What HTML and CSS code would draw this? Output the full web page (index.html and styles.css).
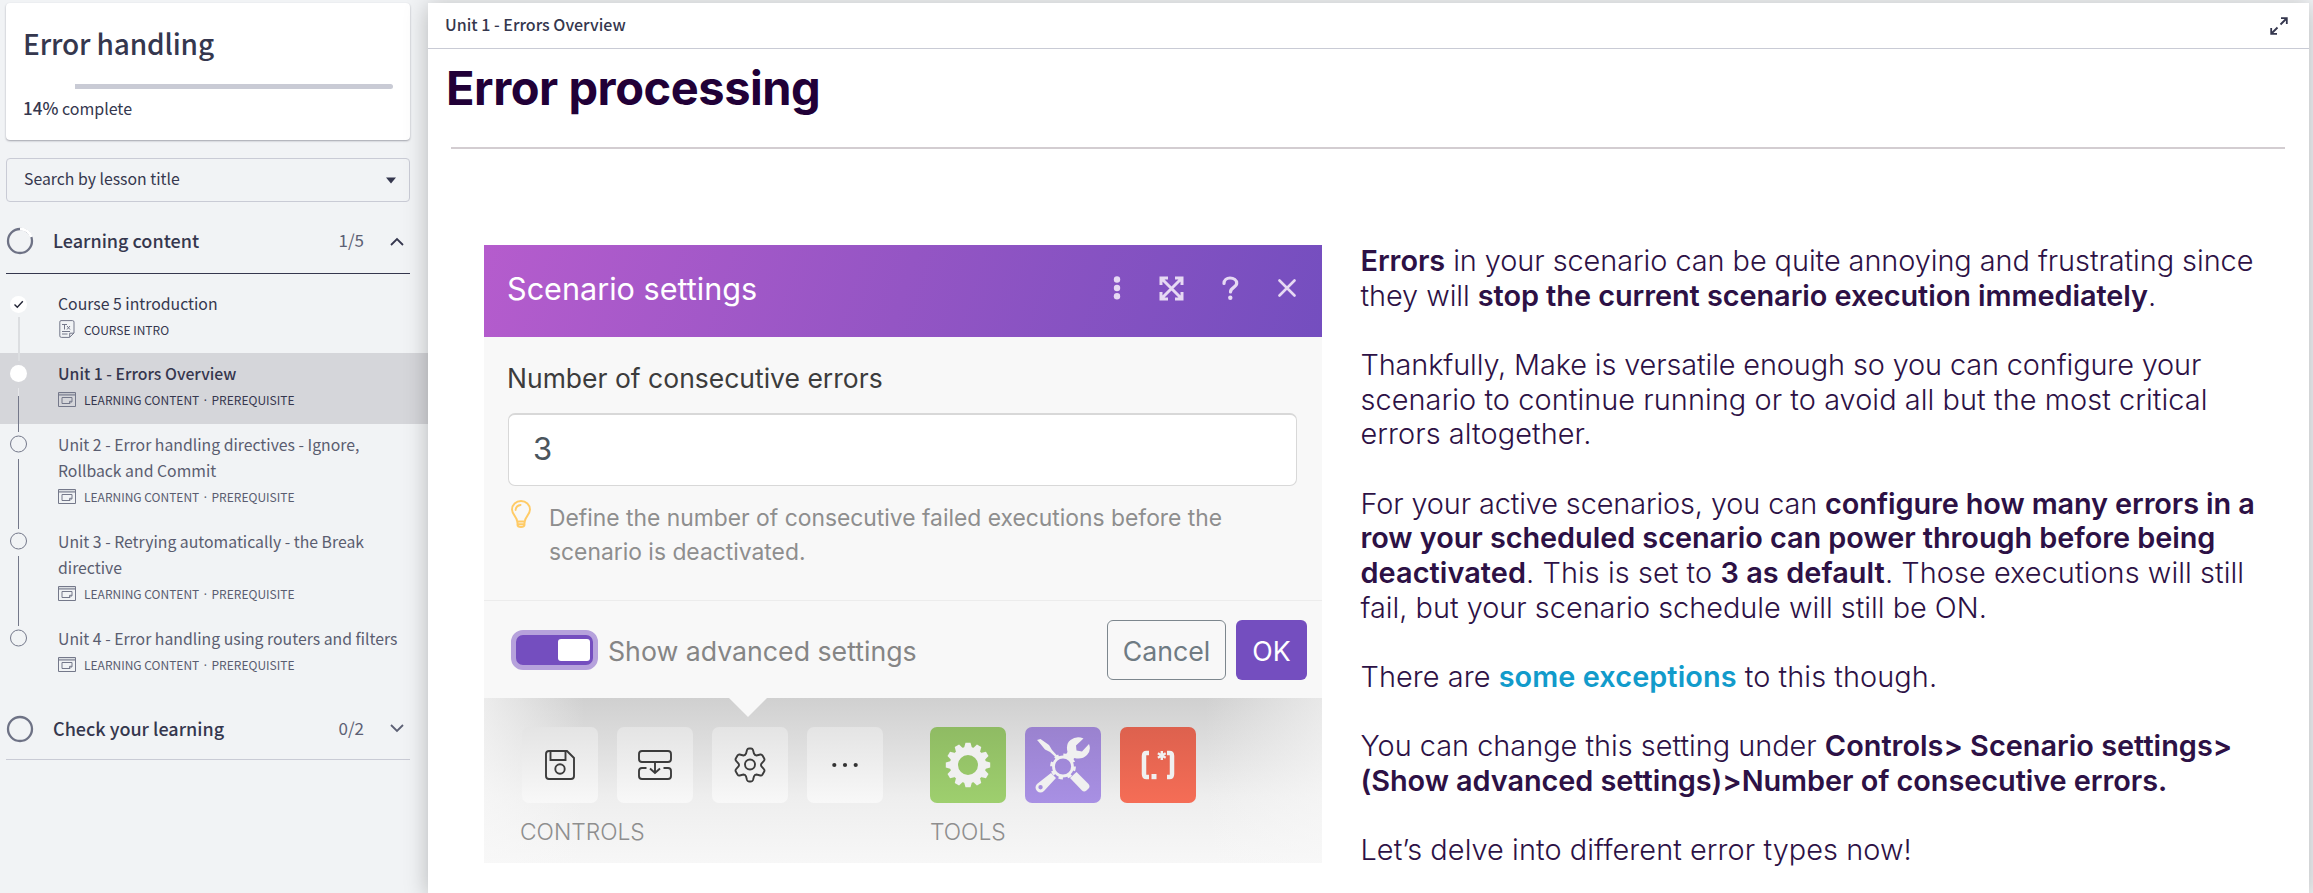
FILE: index.html
```html
<!DOCTYPE html>
<html lang="en">
<head>
<meta charset="utf-8">
<title>Error handling</title>
<link rel="stylesheet" href="styles.css">
</head>
<body>
<svg class="sprite" width="0" height="0">
  <symbol id="content" viewBox="0 0 18 15"><path d="M.5.5h17v14H.5z M.5 3h17" fill="none" stroke="currentColor"/><path d="M.5 1.500h17v1.500H.5z" fill="currentColor" opacity=".35"/><path d="M4 5.500h10v4l-2 2H4z M14 9.300h-2.400v2" fill="none" stroke="currentColor"/></symbol>
</svg>
<div class="app">
  <aside class="sidebar">
    <section class="card">
      <h1 class="course">Error handling</h1>
      <div class="progress"></div>
      <p class="complete"><b>14%</b> complete</p>
    </section>
    <div class="select"><span>Search by lesson title</span><svg width="10" height="7"><path d="M0 .5h10L5 6.500z" fill="#35374e"/></svg></div>

    <div class="section open">
      <svg class="ring" width="28" height="28" viewBox="0 0 28 28"><circle cx="14" cy="14" r="12" fill="none" stroke="#6e7285" stroke-width="2.300"/><path d="M14 2A12 12 0 0 1 25.500 10" fill="none" stroke="#fff" stroke-width="3"/></svg>
      <h2>Learning content</h2><span class="count">1/5</span>
      <svg width="14" height="9" viewBox="0 0 14 9"><path d="M1 8l6-6 6 6" fill="none" stroke="#35374e" stroke-width="1.800"/></svg>
    </div>
    <ul class="lessons">
      <li class="done">
        <div class="rail"><svg class="dot" width="17" height="17"><circle cx="8.500" cy="8.500" r="8.500" fill="#fff"/><path d="M4.500 8.500l2.800 2.800 5.500-6" fill="none" stroke="#222435" stroke-width="1.400"/></svg><i class="light"></i></div>
        <div class="lesson"><p class="name">Course 5 introduction</p><p class="meta"><svg class="doc" width="16" height="18" viewBox="0 0 16 18"><path d="M2 .6h11.500q1.500 0 1.500 1.500V13l-4.500 4.400H2.500Q.8 17.400.8 15.900V2.100Q.8.600 2 .6z M15 13.200h-4.300v4" fill="none" stroke="#74788a"/><path d="M3 4.500h5M5.500 4.500v5M8 6l3 3.500M11 6L8 9.500M3 11.500h8M3 14h5.500" fill="none" stroke="#74788a"/></svg><span>COURSE INTRO</span></p></div>
      </li>
      <li class="current">
        <div class="rail"><svg class="dot" width="17" height="17"><circle cx="8.500" cy="8.500" r="8.500" fill="#fff"/></svg><i class="mixed"></i></div>
        <div class="lesson"><p class="name">Unit 1 - Errors Overview</p><p class="meta"><svg width="18" height="15"><use href="#content"/></svg><span>LEARNING CONTENT<em>·</em>PREREQUISITE</span></p></div>
      </li>
      <li>
        <div class="rail"><svg class="dot" width="17" height="18"><circle cx="8.500" cy="9" r="8" fill="none" stroke="#74788a"/></svg><i></i></div>
        <div class="lesson"><p class="name">Unit 2 - Error handling directives - Ignore,<br>Rollback and Commit</p><p class="meta"><svg width="18" height="15"><use href="#content"/></svg><span>LEARNING CONTENT<em>·</em>PREREQUISITE</span></p></div>
      </li>
      <li>
        <div class="rail"><svg class="dot" width="17" height="18"><circle cx="8.500" cy="9" r="8" fill="none" stroke="#74788a"/></svg><i></i></div>
        <div class="lesson"><p class="name">Unit 3 - Retrying automatically - the Break<br>directive</p><p class="meta"><svg width="18" height="15"><use href="#content"/></svg><span>LEARNING CONTENT<em>·</em>PREREQUISITE</span></p></div>
      </li>
      <li>
        <div class="rail"><svg class="dot" width="17" height="18"><circle cx="8.500" cy="9" r="8" fill="none" stroke="#74788a"/></svg></div>
        <div class="lesson"><p class="name">Unit 4 - Error handling using routers and filters</p><p class="meta"><svg width="18" height="15"><use href="#content"/></svg><span>LEARNING CONTENT<em>·</em>PREREQUISITE</span></p></div>
      </li>
    </ul>
    <div class="section closed">
      <svg class="ring" width="28" height="28" viewBox="0 0 28 28"><circle cx="14" cy="14" r="12" fill="none" stroke="#6e7285" stroke-width="2.300"/></svg>
      <h2>Check your learning</h2><span class="count">0/2</span>
      <svg width="14" height="9" viewBox="0 0 14 9"><path d="M1 1l6 6 6-6" fill="none" stroke="#5c6074" stroke-width="1.800"/></svg>
    </div>
  </aside>

  <main class="panel">
    <header class="bar"><span>Unit 1 - Errors Overview</span>
      <svg width="18" height="18" viewBox="0 0 18 18"><path d="M10.500 7.500L16 2M11 1.200h5.800V7M7.500 10.500L2 16M1.200 11v5.800H7" fill="none" stroke="#35374e" stroke-width="1.800"/></svg>
    </header>
    <h1 class="title">Error processing</h1>
    <hr>
    <div class="columns">
      <figure class="shot">
        <div class="head">
          <span class="head-title">Scenario settings</span>
          <svg class="i1" width="8" height="24" viewBox="0 0 8 24"><g fill="#e6d9f3"><circle cx="4" cy="3.500" r="3.200"/><circle cx="4" cy="12" r="3.200"/><circle cx="4" cy="20.300" r="3.200"/></g></svg>
          <svg class="i2" width="25" height="25" viewBox="0 0 25 25"><path d="M2 9V2h7M16 2h7v7M23 16v7h-7M9 23H2v-7M3 3l19 19M22 3L3 22" fill="none" stroke="#e6d9f3" stroke-width="3"/></svg>
          <svg class="i3" width="17" height="24" viewBox="0 0 17 24"><path d="M2 7.500C2 3.800 4.800 2 8 2c3.800 0 6.700 2 6.700 5.300 0 4.200-6.200 4-6.200 8.700" fill="none" stroke="#e6d9f3" stroke-width="3.200" stroke-linecap="round"/><circle cx="8.300" cy="21.700" r="2.200" fill="#e6d9f3"/></svg>
          <svg class="i4" width="18" height="18" viewBox="0 0 18 18"><path d="M1.500 1.500l15 15M16.500 1.500l-15 15" stroke="#e6d9f3" stroke-width="2.600" stroke-linecap="round"/></svg>
        </div>
        <div class="form">
          <label>Number of consecutive errors</label>
          <div class="input">3</div>
          <div class="hint">
            <svg width="20" height="28" viewBox="0 0 20 28"><path d="M6.200 21.500C6 17 1 14.500 1 9.500a9 8.500 0 0 1 18 0c0 5-5 7.500-5.200 12zM6.500 22v3q0 2 3.500 2t3.500-2v-3M6.500 24.200h7M4.600 10q.4-4.600 5-5" fill="none" stroke="#ffcb66" stroke-width="1.900" stroke-linecap="round"/></svg>
            <p>Define the number of consecutive failed executions before the<br>scenario is deactivated.</p>
          </div>
        </div>
        <div class="foot">
          <span class="toggle"><i></i></span><span class="adv">Show advanced settings</span>
          <span class="btn cancel">Cancel</span><span class="btn ok">OK</span>
        </div>
        <div class="toolbar">
          <div class="group controls">
            <div class="tiles">
              <span class="tile"><svg width="30" height="30" viewBox="0 0 30 30"><path d="M4 1h18l7 7v18q0 3-3 3H4q-3 0-3-3V4q0-3 3-3zM5.500 1v9h15V1" fill="none" stroke="#3c3c3c" stroke-width="1.900"/><circle cx="15" cy="19" r="4.700" fill="none" stroke="#3c3c3c" stroke-width="1.900"/></svg></span>
              <span class="tile"><svg width="34" height="30" viewBox="0 0 34 30"><path d="M4 1h26q3 0 3 3v5q0 3-3 3H4q-3 0-3-3V4q0-3 3-3zM8.500 18H4q-3 0-3 3v5q0 3 3 3h26q3 0 3-3v-5q0-3-3-3h-4.500M17 12v11M12 18.500l5 4.500 5-4.500" fill="none" stroke="#3c3c3c" stroke-width="1.900"/></svg></span>
              <span class="tile"><svg width="34" height="36" viewBox="0 0 34 36"><path d="M14 2.500q.5-1.500 2-1.500h2q1.500 0 2 1.500l1 3.700q.6 1.600 2.500 1.800l3.800-1q1.400-.3 2.200 1l1.700 3q.7 1.300-.3 2.300l-2.400 2.700q-1 1.500 0 3l2.400 2.700q1 1 .3 2.300l-1.700 3q-.8 1.300-2.200 1l-3.800-1q-1.900.2-2.500 1.800l-1 3.700q-.5 1.500-2 1.500h-2q-1.500 0-2-1.500l-1-3.700q-.6-1.600-2.500-1.800l-3.800 1q-1.400.3-2.200-1l-1.700-3q-.7-1.300.3-2.300l2.400-2.700q1-1.500 0-3l-2.400-2.700q-1-1-.3-2.300l1.700-3q.8-1.300 2.200-1l3.800 1q1.900-.2 2.500-1.800z" transform="translate(0 .5)" fill="none" stroke="#3c3c3c" stroke-width="1.900"/><circle cx="17" cy="17.500" r="5" fill="none" stroke="#3c3c3c" stroke-width="1.900"/></svg></span>
              <span class="tile"><svg width="26" height="6"><g fill="#333"><circle cx="2.300" cy="3" r="2.100"/><circle cx="13" cy="3" r="2.100"/><circle cx="23.700" cy="3" r="2.100"/></g></svg></span>
            </div>
            <p>CONTROLS</p>
          </div>
          <div class="group tools">
            <div class="tiles">
              <span class="tile green"><svg width="46" height="46" viewBox="-23 -23 46 46"><circle r="14" fill="none" stroke="#f0f0f0" stroke-width="8"/><g fill="#f0f0f0"><path id="t" d="M-4-17l1.500-5.200h5L4-17z"/><use href="#t" transform="rotate(30)"/><use href="#t" transform="rotate(60)"/><use href="#t" transform="rotate(90)"/><use href="#t" transform="rotate(120)"/><use href="#t" transform="rotate(150)"/><use href="#t" transform="rotate(180)"/><use href="#t" transform="rotate(210)"/><use href="#t" transform="rotate(240)"/><use href="#t" transform="rotate(270)"/><use href="#t" transform="rotate(300)"/><use href="#t" transform="rotate(330)"/></g></svg></span>
              <span class="tile violet"><svg width="56" height="56" viewBox="0 0 56 56"><g fill="#f0f0f0"><path d="M2 3l3.500-1 8.500 6 3 5 5.500 6-1.500 1.500-6-5.500-5-2.500-7-8.500z"/><path d="M48.500 1.500l-7.500 7 .5 5 5.500 1 7-7.500q2.500 6-2 11-5 5-12.500 3l-3 3-6-6 2-3q-2-8 3-12 6-4.500 13-1.500z"/><path d="M35 41l6.500-6 12 12q2 2.500 0 4.500l-2 2q-2.500 2-4.500 0z"/><path fill-rule="evenodd" d="M16 36l5 5-12 13q-3.500 3-7 0-3-3.500 0-7zM5.500 48a2.200 2.200 0 1 0 .1 4.400 2.200 2.200 0 0 0-.1-4.400z"/></g><g transform="translate(28 29.500)"><circle r="9.500" fill="none" stroke="#f0f0f0" stroke-width="2.800"/><circle r="11.500" fill="none" stroke="#f0f0f0" stroke-width="2.800" stroke-dasharray="4.300 4.730"/></g></svg></span>
              <span class="tile red"><svg width="38" height="30" viewBox="0 0 38 30"><path d="M10 3H7.500Q5 3 5 6v18q0 3 2.500 3H10M28 3h2.500Q33 3 33 6v18q0 3-2.500 3H28" fill="none" stroke="#f0f0f0" stroke-width="4.500"/><path d="M12.500 24h5v5.200h-5z" fill="#f0f0f0"/><path d="M22.800 1v9M18.900 3.300l7.800 4.400M26.700 3.300l-7.800 4.400" stroke="#f0f0f0" stroke-width="2.400"/></svg></span>
            </div>
            <p>TOOLS</p>
          </div>
          <svg class="arrow" width="38" height="20"><path d="M0 0h38L19 19z" fill="#f8f8f8"/></svg>
        </div>
      </figure>
      <article class="copy">
        <p><span class="snug"><b>Errors</b> in your scenario can be quite annoying and frustrating since</span><br><span class="snug">they will <b>stop the current scenario execution immediately</b>.</span></p>
        <p><span class="tight">Thankfully, Make is versatile enough so you can configure your</span><br><span class="loose">scenario to continue running or to avoid all but the most critical</span><br><span class="loose">errors altogether.</span></p>
        <p><span class="tight">For your active scenarios, you can <b>configure how many errors in a</b></span><br><b class="snug">row your scheduled scenario can power through before being</b><br><span class="loose"><b>deactivated</b>. This is set to <b>3 as default</b>. Those executions will still</span><br>fail, but your scenario schedule will still be ON.</p>
        <p class="loose">There are <b class="link">some exceptions</b> to this though.</p>
        <p>You can change this setting under <b>Controls&gt; Scenario settings&gt;</b><br><b class="snug">(Show advanced settings)&gt;Number of consecutive errors.</b></p>
        <p class="loose">Let’s delve into different error types now!</p>
      </article>
    </div>
  </main>
</div>
</body>
</html>
```

FILE: styles.css
```css
* { box-sizing: border-box; }
html, body { height: 893px; overflow: hidden; }
body { margin: 0; background: #f1f3f5; font-family: "Noto Sans CJK SC", "Noto Sans", sans-serif; color: #35374e; }
h1, h2, p, ul, figure { margin: 0; padding: 0; }
.sprite { display: block; }
.app { display: flex; height: 893px; overflow: hidden; white-space: nowrap; }
.sidebar { width: 428px; flex: none; padding-top: 3px; background: #f1f3f5; }
.card { width: 404px; height: 137px; margin-left: 6px; padding: 15px 17px 0 18px; background: #fff; border-radius: 4px; box-shadow: 0 1px 2px rgba(40, 42, 60, .4); }
.course { font-size: 28px; line-height: 50px; font-weight: 500; letter-spacing: -.15px; margin-left: -1px; }
.progress { height: 5px; margin: 16px 0 0 51px; background: #c9cbd5; border-radius: 0 3px 3px 0; }
.complete { font-size: 16px; line-height: 24px; margin: 7px 0 0 -1px; }
.complete b { font-size: 17px; font-weight: 500; }
.select { display: flex; align-items: center; justify-content: space-between; width: 404px; height: 44px; margin: 18px 0 0 6px; padding: 0 13px 0 17px; border: 1px solid #c9cbd5; border-radius: 4px; font-size: 15.800px; }
.select span { padding-bottom: 4px; }
.section { display: flex; align-items: center; width: 404px; height: 72px; margin-left: 6px; padding: 7px 6px 0 0; border-bottom: 1px solid #c9cbd5; }
.section.open { border-color: #35374e; }
.section.closed { height: 71px; padding-top: 9px; }
.ring { margin-right: 19px; }
.section h2 { font-size: 18px; font-weight: 500; flex: 1; line-height: 26px; padding-bottom: 2px; }
.count { font-size: 17px; line-height: 26px; padding-bottom: 2px; margin-right: 26px; color: #5c6074; }
.lessons { list-style: none; padding-top: 8px; }
.lessons li { display: flex; height: 71px; color: #5a5d70; }
.lessons li:nth-child(3), .lessons li:nth-child(4) { height: 97px; }
.lessons li.done, .lessons li.current { color: #35374e; }
.lessons .current { background: #d5d6da; }
.rail { width: 48px; margin: 11px 0 -8px 10px; display: flex; flex-direction: column; align-items: flex-start; gap: 6px; }
.done .rail { margin-top: 14px; gap: 4px; }
.current .rail { margin-top: 12px; }
.dot { flex: none; }
.rail i { width: 1px; flex: 1; margin-left: 8px; background: #74788a; }
.rail i.light { background: #dcdee1; width: 2px; }
.rail i.mixed { background: linear-gradient(#e6e7ea 8px, #74788a 8px); }
.name { font-size: 15.800px; line-height: 26px; padding-top: 8px; }
.done .name { padding-top: 9px; }
.current .name { font-weight: 500; }
.meta { display: flex; align-items: center; gap: 8px; height: 24px; font-size: 12px; }
.doc { margin: 0 1px; }
.meta svg { color: #74788a; }
.meta em { font-family: "Noto Sans", sans-serif; font-style: normal; line-height: 1; margin: 0 4.500px; }
.panel { position: relative; width: 1881px; margin-top: 3px; background: #fff; box-shadow: 0 3px 22px rgba(0, 0, 0, .25); }
.bar { display: flex; justify-content: space-between; align-items: center; height: 46px; padding: 0 21px 0 17px; border-bottom: 1px solid #c9cbd5; font-size: 16px; font-weight: 500; }
.bar span { padding-bottom: 3px; }
.title { font: 700 47px/56px Inter, sans-serif; letter-spacing: -.45px; color: #210037; margin: 11px 0 0 18px; }
hr { height: 2px; border: 0; background: #d3cdd1; margin: 31px 24px 0 23px; }
.columns { display: flex; padding: 96px 0 0 56px; font-family: Inter, sans-serif; }
.shot { width: 838px; height: 618px; background: #f8f8f8; }
.head { display: flex; align-items: center; height: 92px; padding: 0 26px 6px 23px; color: #fff; background: linear-gradient(108deg, #b55ccd, #9455c4 50%, #744ebf); }
.head-title { flex: 1; font-size: 30.600px; padding-top: 1px; }
.i1 { margin-right: 38px; } .i2 { margin-right: 38px; } .i3 { margin-right: 39px; }
.form { height: 264px; padding: 24px 25px 0 24px; border-bottom: 1px solid #ececec; }
.form label { display: block; font-size: 26.500px; line-height: 34px; color: #3c3c3c; margin-left: -1px; }
.input { display: flex; align-items: center; height: 73px; margin-top: 18px; padding: 0 0 4px 24px; background: #fff; border: 1px solid #d8d8d8; border-top-width: 2px; border-radius: 7px; font-size: 31px; color: #4b555d; }
.hint { display: flex; gap: 18px; padding: 14px 0 0 3px; font-size: 22.850px; line-height: 34.300px; color: #8e8e8e; }
.hint p { padding-top: 1px; }
.foot { display: flex; align-items: center; height: 97px; padding: 0 15px 0 27px; font-size: 26.700px; color: #858585; }
.toggle { width: 87px; height: 40px; padding: 4px 3px; border: 5px solid #b6a2dc; border-radius: 12px; background: #744ebf; display: flex; justify-content: flex-end; }
.toggle i { width: 32px; background: #fff; border-radius: 3px; }
.adv { flex: 1; margin-left: 10px; padding-top: 2px; }
.btn { display: flex; align-items: center; justify-content: center; height: 60px; padding-top: 2px; border-radius: 6px; }
.cancel { width: 119px; border: 1.500px solid #7d878e; color: #6f7b83; margin-right: 10px; }
.ok { width: 71px; background: #744ebf; color: #fff; }
.toolbar { position: relative; display: flex; height: 165px; padding: 29px 0 0 38px; background: linear-gradient(90deg, rgba(248,248,248,.7), rgba(248,248,248,0) 12%, rgba(248,248,248,0) 86%, rgba(248,248,248,.6)), linear-gradient(#d0d0d0, #dcdcdc 25%, #eee 60%, #f7f7f7); }
.arrow { position: absolute; left: 245px; top: 0; }
.tiles { display: flex; gap: 19px; }
.tile { width: 76px; height: 76px; border-radius: 7px; display: flex; align-items: center; justify-content: center; background: linear-gradient(#e4e4e4, #f8f8f8); }
.green { background: linear-gradient(#8fbb63, #9ecf6e); }
.violet { background: linear-gradient(#9a82cf, #a890e4); }
.red { background: linear-gradient(#dd614e, #f56d56); }
.controls { margin-right: 47px; }
.group p { font-size: 22.800px; font-weight: 300; line-height: 30px; margin: 14px 0 0 -2px; color: #8e8e8e; }
.tools p { margin-left: 0; }
.copy { margin-left: 38.500px; margin-top: -1px; font-size: 28.890px; line-height: 34.667px; font-weight: 300; color: #2d1145; }
.copy p { margin-bottom: 34.667px; }
.copy b { font-weight: 600; }
.copy .link { color: #129bcb; }
.snug { letter-spacing: -.06px; }
.tight { letter-spacing: -.12px; }
.loose { letter-spacing: .07px; }
```
